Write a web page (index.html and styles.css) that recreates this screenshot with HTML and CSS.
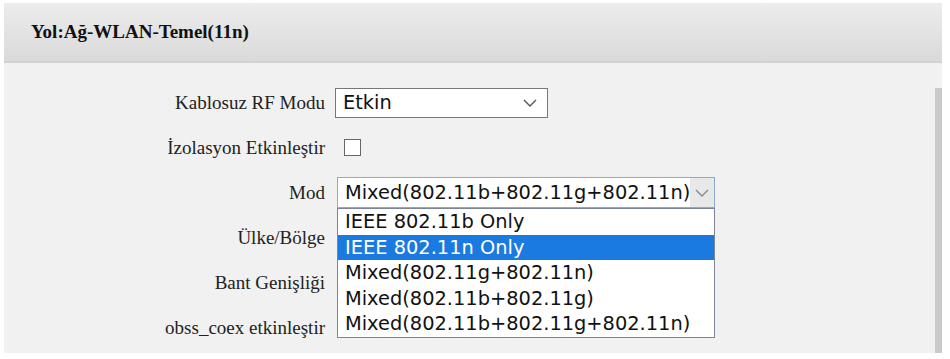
FILE: index.html
```html
<!DOCTYPE html>
<html>
<head>
<meta charset="UTF-8">
<title>Yol:Ağ-WLAN-Temel(11n)</title>
<link rel="stylesheet" href="styles.css">
</head>
<body>
	<div id="cadre">
		<div class="entete">Yol:Ağ-WLAN-Temel(11n)</div>
		<div class="contenu">
			<div class="ligne">
				<div class="libelle">Kablosuz RF Modu</div>
				<div class="champ">
					<div class="liste liste_rf">
						<span class="valeur">Etkin</span>
						<svg class="fleche" width="14" height="8" viewBox="0 0 14 8"><path d="M1 1 L7 7 L13 1" fill="none" stroke="#555" stroke-width="1.4"/></svg>
					</div>
				</div>
			</div>
			<div class="ligne">
				<div class="libelle">İzolasyon Etkinleştir</div>
				<div class="champ"><span class="case"></span></div>
			</div>
			<div class="ligne">
				<div class="libelle">Mod</div>
				<div class="champ">
					<div class="liste liste_mod">
						<span class="valeur">Mixed(802.11b+802.11g+802.11n)</span>
						<span class="zone_fleche">
							<svg class="fleche" width="14" height="8" viewBox="0 0 14 8"><path d="M1 1 L7 7 L13 1" fill="none" stroke="#888" stroke-width="1.4"/></svg>
						</span>
					</div>
					<ul class="options">
						<li>IEEE 802.11b Only</li>
						<li class="choisi">IEEE 802.11n Only</li>
						<li>Mixed(802.11g+802.11n)</li>
						<li>Mixed(802.11b+802.11g)</li>
						<li>Mixed(802.11b+802.11g+802.11n)</li>
					</ul>
				</div>
			</div>
			<div class="ligne">
				<div class="libelle">Ülke/Bölge</div>
				<div class="champ"></div>
			</div>
			<div class="ligne">
				<div class="libelle">Bant Genişliği</div>
				<div class="champ"></div>
			</div>
			<div class="ligne">
				<div class="libelle">obss_coex etkinleştir</div>
				<div class="champ"></div>
			</div>
			<div class="barre"></div>
		</div>
	</div>
</body>
</html>
```

FILE: styles.css
```css
html, body
{
	margin : 0;
	padding : 0;
	background : #fff;
}

body
{
	font : 19px "Liberation Serif", "Times New Roman", serif;
	color : #222;
}

div#cadre
{
	width : 938px;
	margin : 3px 0 0 4px;
}

.entete
{
	height : 58px;
	padding-left : 27px;
	display : flex;
	align-items : center;
	font-weight : bold;
	font-size : 19px;
	color : #111;
	border-bottom : 2px solid #d2d2d2;
	background : linear-gradient(to bottom, #ececec, #dadada);
}

.contenu
{
	position : relative;
	height : 273px;
	padding-top : 17px;
	background : #f1f1f1;
}

.ligne
{
	display : grid;
	grid-template-columns : 321px 1fr;
	column-gap : 10px;
	height : 45px;
	align-items : center;
}

.libelle
{
	text-align : right;
	white-space : nowrap;
}

.champ
{
	position : relative;
	height : 100%;
	display : flex;
	align-items : center;
}

.liste
{
	display : flex;
	align-items : center;
	box-sizing : border-box;
	background : #fff;
	font : 19.4px "DejaVu Sans", Verdana, sans-serif;
	color : #111;
}

.liste_rf
{
	width : 213px;
	height : 30px;
	padding : 0 10px 0 7px;
	border : 1px solid #777;
}

.liste .valeur
{
	flex : 1;
	overflow : hidden;
	white-space : nowrap;
}

.liste_mod
{
	width : 378px;
	height : 31px;
	margin-left : 2px;
	padding-left : 7px;
	border : 1px solid #8fa9cc;
}

.zone_fleche
{
	width : 24px;
	height : 100%;
	display : flex;
	align-items : center;
	justify-content : center;
	background : #e8e8e8;
}

.case
{
	width : 15px;
	height : 15px;
	margin-left : 9px;
	border : 1.5px solid #666;
	background : #fff;
}

.options
{
	position : absolute;
	top : 38px;
	left : 2px;
	width : 376px;
	margin : 0;
	padding : 0;
	list-style : none;
	background : #fff;
	border : 1px solid #7b8593;
	font : 19.4px "DejaVu Sans", Verdana, sans-serif;
	color : #111;
	z-index : 10;
}

.options li
{
	height : 25.6px;
	line-height : 25.6px;
	padding-left : 7px;
	white-space : nowrap;
}

.options li.choisi
{
	background : #1a7ae0;
	color : #fff;
}

.barre
{
	position : absolute;
	right : 0;
	top : 25px;
	bottom : 0;
	width : 7px;
	background : #cacaca;
}
```
